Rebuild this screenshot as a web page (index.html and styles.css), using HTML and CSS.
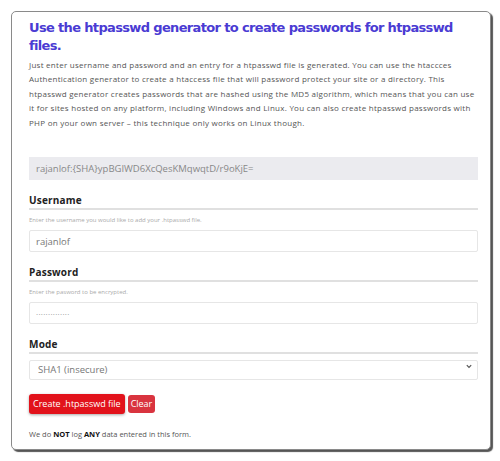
FILE: index.html
```html
<!DOCTYPE html>
<html lang="en">
<head>
    <meta charset="UTF-8">
    <meta name="viewport" content="width=device-width, initial-scale=1.0">
    <title>htpasswd generator</title>
    <link rel="stylesheet" href="styles.css">
</head>
<body>
    <div class="card">
        <h1>Use the htpasswd generator to create passwords for htpasswd files.</h1>
        <p class="intro">Just enter username and password and an entry for a htpasswd file is generated. You can use the htaccces Authentication generator to create a htaccess file that will password protect your site or a directory. This htpasswd generator creates passwords that are hashed using the MD5 algorithm, which means that you can use it for sites hosted on any platform, including Windows and Linux. You can also create htpasswd passwords with PHP on your own server &ndash; this technique only works on Linux though.</p>

        <div class="result">rajanlof:{SHA}ypBGIWD6XcQesKMqwqtD/r9oKjE=</div>

        <form class="gen-form">
            <label class="field-label" for="username">Username</label>
            <div class="help">Enter the username you would like to add your .htpasswd file.</div>
            <input class="field" id="username" type="text" value="rajanlof">

            <label class="field-label" for="password">Password</label>
            <div class="help">Enter the pasword to be encrypted.</div>
            <input class="field pass" id="password" type="text" value="··············">

            <label class="field-label" for="mode">Mode</label>
            <div class="select-wrap">
                <select class="field select" id="mode">
                    <option>SHA1 (insecure)</option>
                </select>
                <svg class="chevron" width="6" height="5" viewBox="0 0 6 5"><path d="M0.8 1.2 L3 3.4 L5.2 1.2" fill="none" stroke="#555" stroke-width="1.2"/></svg>
            </div>

            <div class="actions">
                <button type="button" class="btn btn-create">Create .htpasswd file</button>
                <button type="button" class="btn btn-clear">Clear</button>
            </div>
        </form>

        <p class="note">We do <strong>NOT</strong> log <strong>ANY</strong> data entered in this form.</p>
    </div>
</body>
</html>
```

FILE: styles.css
```css
body {
    margin: 0;
    padding: 11px 9px 9px 11px;
    background: #fff;
    font-family: 'Open Sans', 'DejaVu Sans', sans-serif;
    color: #555;
}

.card {
    border: 1.5px solid #8a8a8a;
    border-radius: 5px;
    box-shadow: 2px 2px 1px #555;
    padding: 7px 12px 9px 17px;
    background: #fff;
}

h1 {
    margin: 0;
    font-family: 'DejaVu Sans', sans-serif;
    font-size: 13px;
    line-height: 18px;
    font-weight: 700;
    color: #4a3bd3;
    letter-spacing: -0.65px;
}

.intro {
    margin: 3px 0 0;
    font-size: 8px;
    line-height: 14.4px;
    letter-spacing: 0.26px;
    color: #555;
}

.result {
    margin-top: 27px;
    height: 23px;
    line-height: 23px;
    padding: 0 7px;
    background: #ebebef;
    font-size: 9.5px;
    color: #888;
}

.gen-form {
    display: flex;
    flex-direction: column;
    margin-top: 13px;
}

.field-label {
    font-size: 10px;
    line-height: 14px;
    font-weight: 700;
    letter-spacing: 0.2px;
    color: #222;
    padding-bottom: 1px;
    border-bottom: 2px solid #e0e0e0;
}

.help {
    margin: 6px 0 5px;
    font-size: 6px;
    line-height: 9px;
    color: #aaa;
}

.field {
    box-sizing: border-box;
    height: 22px;
    margin: 0;
    padding: 0 6px;
    border: 1px solid #e6e6e6;
    border-radius: 2px;
    background: #fff;
    font-family: 'Open Sans', sans-serif;
    font-size: 9.5px;
    color: #777;
    outline: none;
}

.pass {
    font-size: 8px;
    letter-spacing: 0.3px;
    color: #888;
}

.field + .field-label {
    margin-top: 13px;
}

.select-wrap {
    position: relative;
    margin-top: 2px;
}

.select {
    width: 100%;
    height: 20px;
    padding: 0 8px;
    appearance: none;
    -webkit-appearance: none;
}

.chevron {
    position: absolute;
    right: 6px;
    top: 8px;
}

.actions {
    display: flex;
    align-items: center;
    gap: 3px;
    margin-top: 14px;
}

.btn {
    border: none;
    border-radius: 3px;
    color: #fff;
    font-family: 'Open Sans', sans-serif;
    font-size: 9px;
    padding: 0 4px;
    cursor: pointer;
}

.btn-create {
    height: 20px;
    padding: 0 4px;
    background: #e2121b;
    box-shadow: 0 1px 3px rgba(0, 0, 0, 0.35);
}

.btn-clear {
    height: 18px;
    padding: 0 3px;
    background: #d9343f;
}

.note {
    margin: 14px 0 0;
    font-size: 7.5px;
    line-height: 12px;
    color: #555;
}

.note strong {
    color: #111;
}
```
